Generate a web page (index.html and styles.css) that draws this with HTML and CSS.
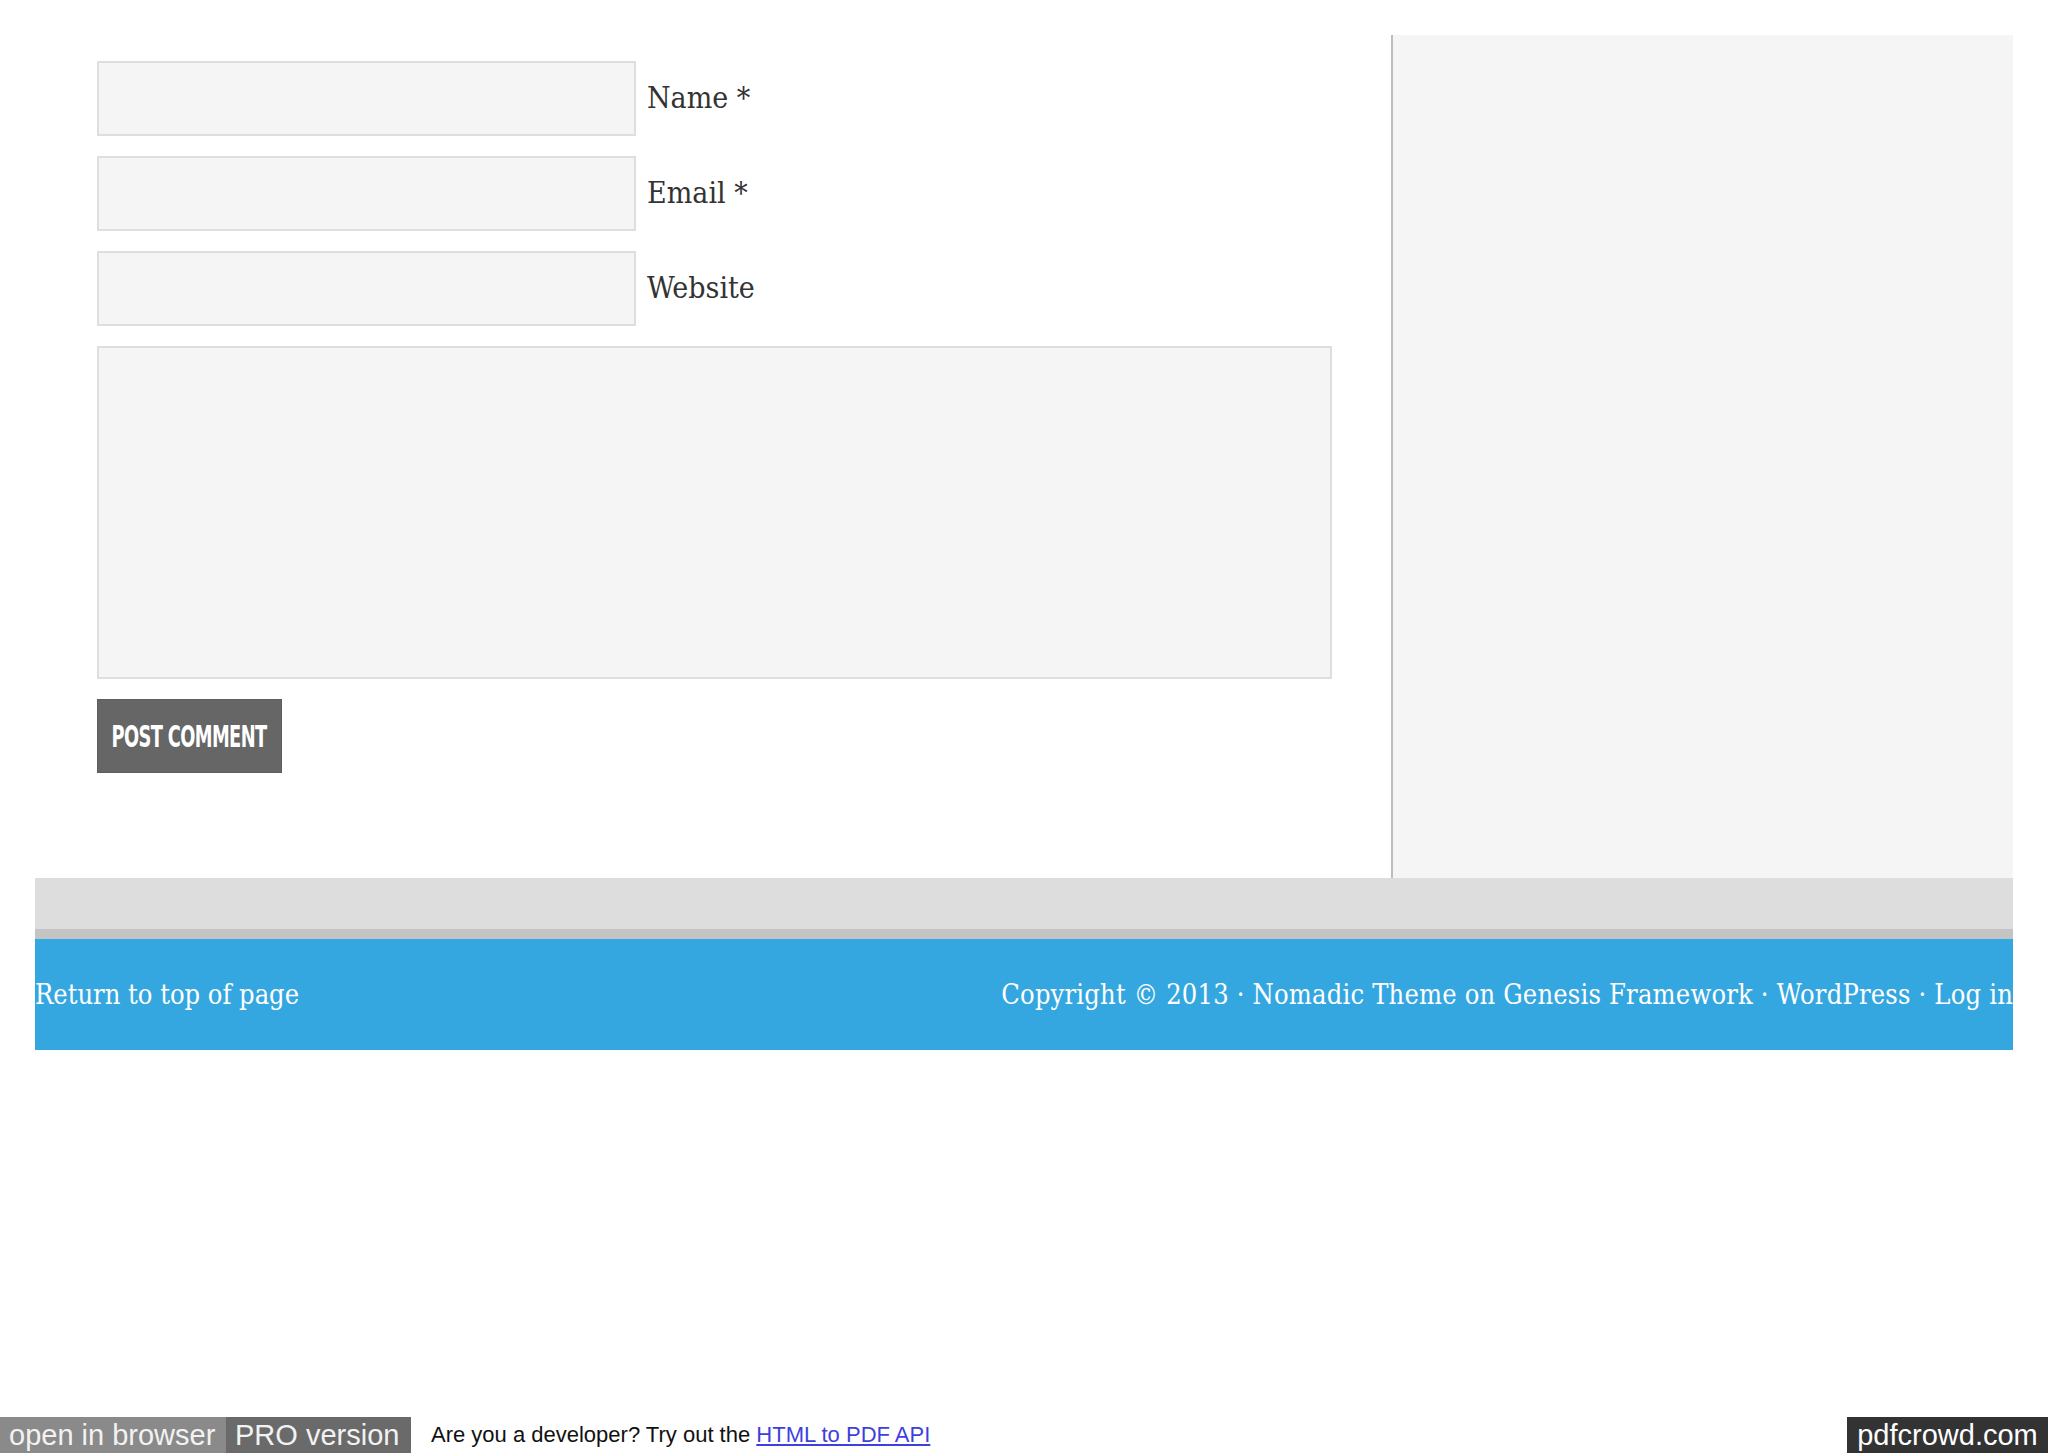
FILE: index.html
```html
<!DOCTYPE html>
<html lang="en">
<head>
<meta charset="utf-8">
<title>Comment form</title>
<link rel="stylesheet" href="styles.css">
</head>
<body>
<div class="page">
  <div class="content-row">
    <main class="main">
      <form class="comment-form">
        <div class="field">
          <input class="text-input" type="text" id="author">
          <label class="field-label" for="author">Name *</label>
        </div>
        <div class="field">
          <input class="text-input" type="text" id="email">
          <label class="field-label" for="email">Email *</label>
        </div>
        <div class="field">
          <input class="text-input" type="text" id="url">
          <label class="field-label" for="url">Website</label>
        </div>
        <textarea class="comment-area" id="comment"></textarea>
        <button class="submit-btn" type="button"><span class="submit-text">POST COMMENT</span></button>
      </form>
    </main>
    <aside class="sidebar"></aside>
  </div>
  <div class="footer-widgets"></div>
  <footer class="site-footer">
    <span class="footer-left">Return to top of page</span>
    <span class="footer-right">Copyright © 2013 · Nomadic Theme on Genesis Framework · WordPress · Log in</span>
  </footer>
</div>
<div class="pdf-bar">
  <span class="bar-btn bar-open">open in browser</span>
  <span class="bar-btn bar-pro">PRO version</span>
  <span class="bar-text">Are you a developer? Try out the <a class="bar-link" href="#">HTML to PDF API</a></span>
  <span class="bar-brand">pdfcrowd.com</span>
</div>
</body>
</html>
```

FILE: styles.css
```css
html, body {
  margin: 0;
  padding: 0;
}
body {
  min-height: 100vh;
  display: flex;
  flex-direction: column;
  background: #ffffff;
  font-family: "DejaVu Serif Condensed", "DejaVu Serif", serif;
  color: #333333;
}
.page {
  margin: 35px 35px 0 35px;
  width: 1978px;
}
.content-row {
  display: flex;
  height: 843px;
}
.main {
  flex: 1;
  padding: 26px 0 0 62px;
  background: #ffffff;
}
.comment-form {
  display: flex;
  flex-direction: column;
  gap: 20px;
}
.field {
  display: flex;
  align-items: center;
  gap: 11px;
}
.text-input {
  box-sizing: border-box;
  width: 539px;
  height: 75px;
  margin: 0;
  border: 2px solid #dedede;
  background: #f5f5f5;
  outline: none;
}
.field-label {
  font-family: "DejaVu Serif Condensed", "DejaVu Serif", serif;
  font-size: 30px;
  color: #333333;
  line-height: 1.2;
  margin-top: -2px;
}
.comment-area {
  box-sizing: border-box;
  width: 1235px;
  height: 333px;
  margin: 0;
  border: 2px solid #dedede;
  background: #f5f5f5;
  resize: none;
  outline: none;
}
.submit-btn {
  box-sizing: border-box;
  width: 185px;
  height: 74px;
  margin: 0;
  padding: 0;
  border: 1px solid #5e5e5e;
  background: #666666;
  color: #ffffff;
  display: flex;
  align-items: center;
  justify-content: center;
}
.submit-text {
  display: inline-block;
  font-family: "DejaVu Sans Condensed", "DejaVu Sans", sans-serif;
  font-weight: bold;
  font-size: 31px;
  white-space: nowrap;
  letter-spacing: -1px;
  transform: scaleX(0.64);
}
.sidebar {
  box-sizing: border-box;
  width: 622px;
  background: #f5f5f5;
  border-left: 2px solid #bdbdbd;
}
.footer-widgets {
  height: 51px;
  background: #dddddd;
  border-bottom: 10px solid #c4c4c4;
}
.site-footer {
  height: 111px;
  background: #35a7e0;
  display: flex;
  align-items: center;
  justify-content: space-between;
  color: #ffffff;
  font-family: "DejaVu Serif Condensed", "DejaVu Serif", serif;
  font-size: 27px;
}
.footer-right {
  letter-spacing: 0.2px;
}
.pdf-bar {
  margin-top: auto;
  height: 36px;
  display: flex;
  align-items: stretch;
  font-family: "Liberation Sans", Arial, sans-serif;
}
.bar-btn {
  display: flex;
  align-items: center;
  color: #f2f2f2;
  font-size: 29px;
  padding: 0 9px;
}
.bar-open {
  width: 226px;
  box-sizing: border-box;
  background: #8a8a8a;
}
.bar-pro {
  width: 185px;
  box-sizing: border-box;
  background: #6a6a6a;
}
.bar-text {
  display: flex;
  align-items: center;
  margin-left: 20px;
  font-size: 22px;
  color: #111111;
  white-space: pre;
}
.bar-link {
  color: #3f3fe0;
  text-decoration: underline;
}
.bar-brand {
  margin-left: auto;
  width: 201px;
  box-sizing: border-box;
  display: flex;
  align-items: center;
  justify-content: center;
  background: #333333;
  color: #ffffff;
  font-size: 29px;
}
```
